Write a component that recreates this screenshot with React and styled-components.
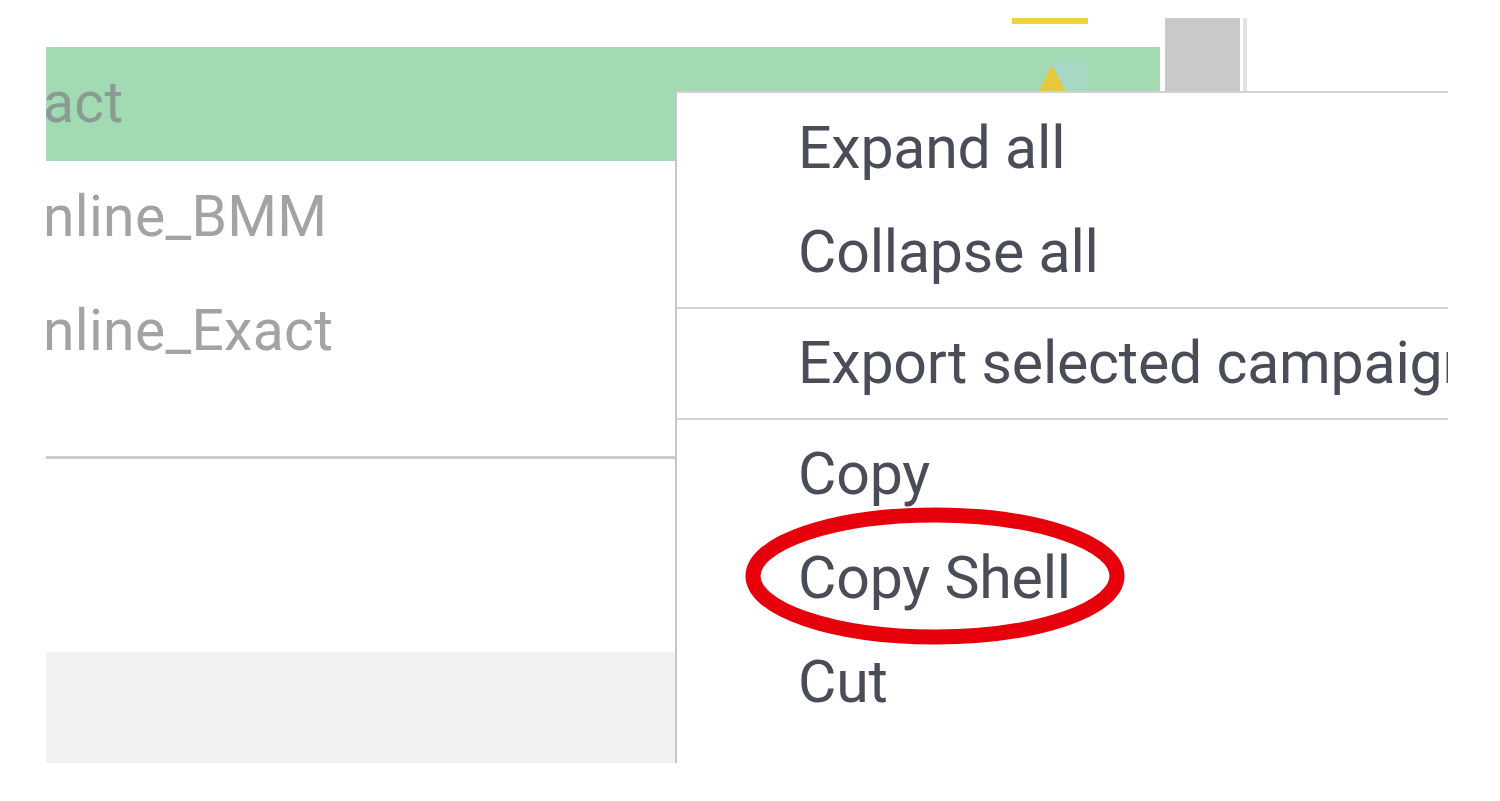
import styled, { createGlobalStyle } from "styled-components";

const GlobalStyle = createGlobalStyle`
    html, body {
        margin: 0;
        padding: 0;
        background: #ffffff;
        overflow: hidden;
    }
    body {
        font-family: Roboto, "Liberation Sans", Arial, sans-serif;
    }
`;

const rows = [
    { name: "act", selected: true },
    { name: "nline_BMM" },
    { name: "nline_Exact" },
];

const menuGroups = [
    ["Expand all", "Collapse all"],
    ["Export selected campaigns"],
    ["Copy", "Copy Shell", "Cut"],
];

const App = () => {
    return (
        <>
            <GlobalStyle />
            <Page>
                <Grid>
                    <HeaderRow>
                        <HeaderSpacer />
                        <SortHead>
                            <SortBar />
                        </SortHead>
                        <EdgeCell />
                    </HeaderRow>
                    {rows.map((row) => (
                        <Row key={row.name} $selected={row.selected}>
                            <NameCell $selected={row.selected}>{row.name}</NameCell>
                            <SortCell>
                                {row.selected && (
                                    <>
                                        <SortGlow />
                                        <SortArrow viewBox="0 0 28 28">
                                            <polygon points="14,0 28,28 0,28" fill="#e6c93a" />
                                        </SortArrow>
                                    </>
                                )}
                            </SortCell>
                            <EdgeCell />
                        </Row>
                    ))}
                    <EmptyRow />
                    <Divider />
                    <Blank />
                    <Footer />
                </Grid>
                <ScrollTrack>
                    <ScrollThumb />
                    <ScrollEdge />
                </ScrollTrack>

                {/* context menu */}
                <Menu>
                    {menuGroups.map((group, gi) => (
                        <MenuGroup key={gi} $first={gi === 0}>
                            {group.map((label) => (
                                <MenuItem key={label}>
                                    {label}
                                    {label === "Copy Shell" && (
                                        <Highlight viewBox="0 0 380 138">
                                            <ellipse
                                                cx="190"
                                                cy="69"
                                                rx="182"
                                                ry="61"
                                                fill="none"
                                                stroke="#e5000b"
                                                strokeWidth="15"
                                            />
                                        </Highlight>
                                    )}
                                </MenuItem>
                            ))}
                        </MenuGroup>
                    ))}
                </Menu>
            </Page>
        </>
    );
};

const Page = styled.div`
    position: relative;
    width: 1500px;
    height: 801px;
    display: flex;
    align-items: flex-start;
    gap: 5px;
    padding-left: 46px;
    box-sizing: border-box;
    overflow: hidden;
`;

const Grid = styled.div`
    width: 1114px;
    display: flex;
    flex-direction: column;
`;

const HeaderRow = styled.div`
    height: 47px;
    display: flex;
`;

const HeaderSpacer = styled.div`
    flex: 1;
`;

const SortHead = styled.div`
    width: 76px;
    padding-top: 18px;
`;

const SortBar = styled.div`
    height: 6px;
    background: #f0d23c;
`;

const EdgeCell = styled.div`
    width: 72px;
`;

const Row = styled.div`
    height: 114px;
    display: flex;
    background: ${(p) => (p.$selected ? "#a2dab3" : "#ffffff")};
`;

const NameCell = styled.div`
    flex: 1;
    display: flex;
    align-items: center;
    overflow: hidden;
    font-size: 57px;
    letter-spacing: 0.3px;
    color: ${(p) => (p.$selected ? "#8a9c92" : "#a3a3a6")};
    margin-left: -3px;
    padding-bottom: 3px;
`;

const SortCell = styled.div`
    position: relative;
    width: 76px;
`;

const SortGlow = styled.div`
    position: absolute;
    left: 36px;
    top: 14px;
    width: 40px;
    height: 32px;
    background: #a6d8c4;
`;

const SortArrow = styled.svg`
    position: absolute;
    left: 26px;
    top: 18px;
    width: 28px;
    height: 28px;
`;

const EmptyRow = styled.div`
    height: 67px;
`;

const Divider = styled.div`
    height: 3px;
    background: #cbcbcd;
`;

const Blank = styled.div`
    height: 193px;
`;

const Footer = styled.div`
    height: 111px;
    background: #f1f2f4;
`;

const ScrollTrack = styled.div`
    margin-top: 18px;
    display: flex;
    gap: 3px;
`;

const ScrollThumb = styled.div`
    width: 75px;
    height: 200px;
    background: #c9c9ca;
`;

const ScrollEdge = styled.div`
    width: 4px;
    height: 200px;
    background: #e2e2e2;
`;

const Menu = styled.div`
    position: absolute;
    left: 675px;
    top: 91px;
    width: 773px;
    height: 672px;
    background: #ffffff;
    border-top: 2px solid #d2d2d4;
    border-left: 2px solid #c6c6c8;
    box-sizing: border-box;
    padding-top: 2px;
    overflow: hidden;
`;

const MenuGroup = styled.div`
    display: flex;
    flex-direction: column;
    border-top: ${(p) => (p.$first ? "none" : "2px solid #d3d3d5")};
    margin-top: ${(p) => (p.$first ? "0" : "4px")};
    padding-top: ${(p) => (p.$first ? "0" : "1px")};
`;

const MenuItem = styled.div`
    position: relative;
    height: 104px;
    display: flex;
    align-items: center;
    padding-left: 121px;
    font-size: 59px;
    letter-spacing: -0.2px;
    color: #4a4c57;
    white-space: nowrap;
`;

const Highlight = styled.svg`
    position: absolute;
    left: 68px;
    top: -18px;
    width: 380px;
    height: 138px;
    pointer-events: none;
`;

export default App;
